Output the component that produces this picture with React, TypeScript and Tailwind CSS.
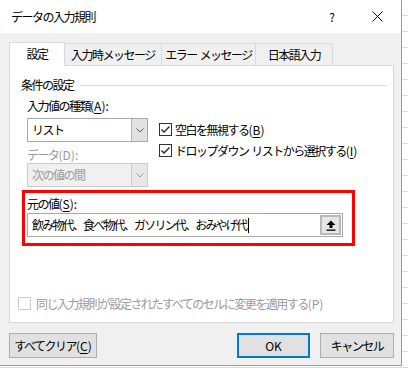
import React from 'react';

const font = { fontFamily: '"Meiryo UI", "Noto Sans CJK JP", "Noto Sans", sans-serif' };

const Chevron: React.FC<{ color?: string }> = ({ color = '#606060' }) => (
  <svg width="8" height="5" viewBox="0 0 8 5">
    <polyline points="0.5,0.5 4,4 7.5,0.5" fill="none" stroke={color} strokeWidth="1" />
  </svg>
);

const Check: React.FC<{ checked?: boolean; disabled?: boolean }> = ({ checked, disabled }) => (
  <div
    className={`w-[13px] h-[13px] shrink-0 border bg-white flex items-center justify-center ${
      disabled ? 'border-[#cccccc]' : 'border-[#333333]'
    }`}
  >
    {checked && (
      <svg width="11" height="11" viewBox="0 0 11 11">
        <polyline points="1.5,5.5 4,8 9.5,2.5" fill="none" stroke="#222" strokeWidth="1.3" />
      </svg>
    )}
  </div>
);

// latin part of a label, e.g. "(A):" with the access key underlined
const Key: React.FC<{ k: string; tail?: string; plain?: boolean }> = ({ k, tail = '', plain }) => (
  <span className="tracking-normal">
    (<span className={plain ? '' : 'underline underline-offset-2'}>{k}</span>){tail}
  </span>
);

export default function App() {
  return (
    <div
      className="w-[408px] h-[371px] overflow-hidden bg-white bg-[repeating-linear-gradient(to_bottom,transparent_0,transparent_15px,#dadada_15px,#dadada_16px)] text-[12px] text-black tracking-[-1.5px]"
      style={font}
    >
      <div className="w-[402px] h-[366px] flex flex-col border-r border-b border-[#9a9a9a] bg-[#f0f0f0]">
        {/* Title bar */}
        <div className="h-[33px] bg-white flex items-center pl-[11px] shrink-0">
          <span className="flex-1">データの入力規則</span>
          <span className="w-[10px] text-center mr-[35px] tracking-normal">?</span>
          <svg width="11" height="11" viewBox="0 0 11 11" className="mr-[18px]">
            <line x1="0.5" y1="0.5" x2="10.5" y2="10.5" stroke="#111" strokeWidth="1" />
            <line x1="10.5" y1="0.5" x2="0.5" y2="10.5" stroke="#111" strokeWidth="1" />
          </svg>
        </div>

        <div className="flex flex-col pl-[9px] pt-[9px]">
          {/* Tabs */}
          <div className="flex items-end">
            <div className="relative z-10 -mb-px w-[56px] h-[24px] bg-white border-l border-t border-r border-[#d9d9d9] flex items-center justify-center pb-[1px]">
              設定
            </div>
            <div className="w-[97px] h-[22px] border-t border-r border-[#d9d9d9] flex items-center justify-center">入力時メッセージ</div>
            <div className="w-[94px] h-[22px] border-t border-r border-[#d9d9d9] flex items-center justify-center">
              エラー<span className="tracking-normal">&nbsp;</span>メッセージ
            </div>
            <div className="w-[77px] h-[22px] border-t border-r border-[#d9d9d9] flex items-center justify-center">日本語入力</div>
          </div>

          {/* Panel */}
          <div className="w-[385px] h-[258px] bg-white border border-[#d9d9d9] flex flex-col">
            <div className="mt-[12px] h-[14px] flex items-center pl-[11px] pr-[6px]">
              <span className="leading-[14px] mr-[6px]">条件の設定</span>
              <div className="flex-1 border-t border-[#dcdcdc]" />
            </div>

            <div className="mt-[7px] h-[14px] leading-[14px] pl-[17px]">
              入力値の種類<Key k="A" tail=":" />
            </div>

            <div className="mt-[5px] flex items-start pl-[17px]">
              <div className="flex flex-col">
                <div className="flex h-[24px] w-[121px] border border-[#a8a8a8] bg-white">
                  <div className="flex-1 pl-[4px] leading-[22px]">リスト</div>
                  <div className="w-[16px] bg-[#e1e1e1] border-l border-[#b4b4b4] flex items-center justify-center">
                    <Chevron />
                  </div>
                </div>
                <div className="mt-[6px] h-[14px] leading-[14px] text-[#9a9a9a]">
                  データ<Key k="D" tail=":" plain />
                </div>
                <div className="mt-[1px] flex h-[24px] w-[121px] border border-[#cccccc] bg-[#f0f0f0]">
                  <div className="flex-1 pl-[4px] leading-[22px] text-[#9a9a9a]">次の値の間</div>
                  <div className="w-[16px] bg-[#e8e8e8] border-l border-[#cccccc] flex items-center justify-center">
                    <Chevron color="#9a9a9a" />
                  </div>
                </div>
              </div>

              <div className="ml-[11px] mt-[5px] flex flex-col gap-[8px]">
                <div className="flex items-center h-[13px]">
                  <Check checked />
                  <span className="ml-[3px] leading-[13px]">
                    空白を無視する<Key k="B" />
                  </span>
                </div>
                <div className="flex items-center h-[13px]">
                  <Check checked />
                  <span className="ml-[3px] leading-[13px]">
                    ドロップダウン<span className="tracking-normal">&nbsp;</span>リストから選択する<Key k="I" />
                  </span>
                </div>
              </div>
            </div>

            {/* Highlighted source box */}
            <div className="mt-[3px] ml-[12px] w-[333px] h-[56px] border-[3px] border-[#ff0000] flex flex-col pl-[2px] pt-[4px]">
              <div className="h-[14px] leading-[14px]">
                元の値<Key k="S" tail=":" />
              </div>
              <div className="mt-[2px] w-[316px] h-[24px] border border-[#a8a8a8] bg-white flex items-center">
                <div className="flex-1 flex items-center pl-[4px]">
                  <span className="tracking-[-1.8px]">飲み物代、食べ物代、ガソリン代、おみやげ代</span>
                  <span className="ml-[2px] w-px h-[15px] bg-black" />
                </div>
                <div className="mr-[1px] w-[21px] h-[20px] border-2 border-[#b8b8b8] bg-[#e6e6e6] flex items-center justify-center">
                  <svg width="10" height="11" viewBox="0 0 10 11">
                    <polygon points="5,0.5 9.5,5 6.5,5 6.5,8 3.5,8 3.5,5 0.5,5" fill="#000" />
                    <rect x="0.5" y="9.5" width="9" height="1.3" fill="#000" />
                  </svg>
                </div>
              </div>
            </div>

            <div className="mt-[51px] ml-[8px] flex items-center h-[13px]">
              <Check disabled />
              <span className="ml-[5px] leading-[13px] text-[#9a9a9a]">
                同じ入力規則が設定されたすべてのセルに変更を適用する<Key k="P" plain />
              </span>
            </div>
          </div>

          {/* Buttons */}
          <div className="mt-[10px] w-[385px] flex items-center">
            <button className="w-[88px] h-[25px] bg-[#e1e1e1] border border-[#adadad] flex items-center justify-center">
              すべてクリア<Key k="C" />
            </button>
            <div className="flex-1" />
            <button className="w-[73px] h-[25px] bg-[#e1e1e1] border-2 border-[#0078d7] flex items-center justify-center tracking-normal">
              OK
            </button>
            <button className="ml-[10px] w-[74px] h-[25px] bg-[#e1e1e1] border border-[#adadad] flex items-center justify-center">
              キャンセル
            </button>
          </div>
        </div>
      </div>
    </div>
  );
}
